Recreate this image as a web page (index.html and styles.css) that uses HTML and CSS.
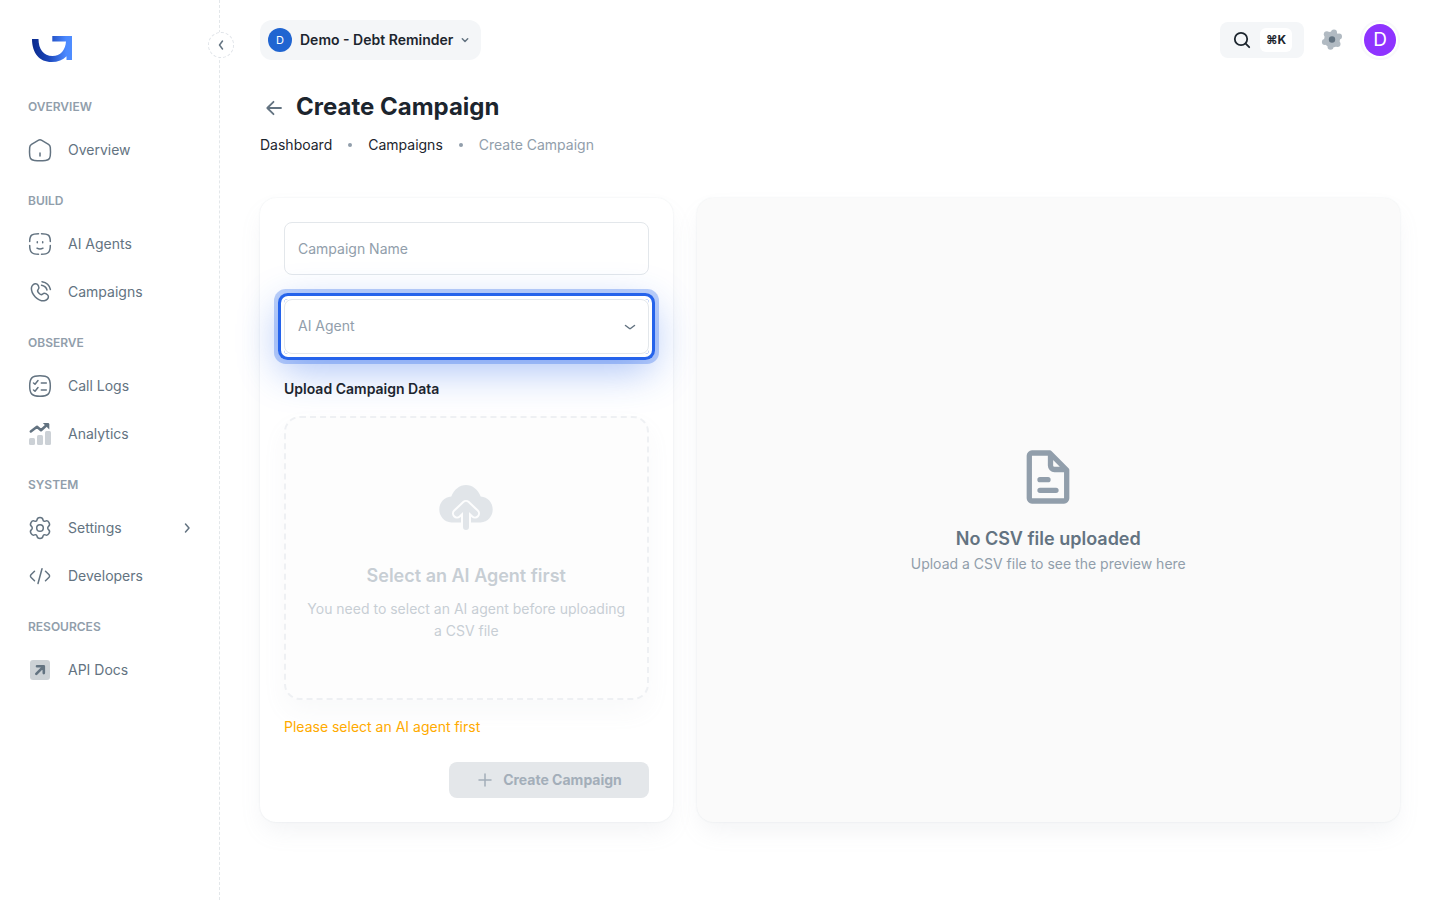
FILE: index.html
```html
<!DOCTYPE html>
<html lang="en">
<head>
    <meta charset="UTF-8">
    <meta name="viewport" content="width=device-width, initial-scale=1.0">
    <title>Create Campaign</title>
    <link rel="stylesheet" href="styles.css">
</head>
<body>
    <aside class="sidebar">
        <a href="#" class="logo" aria-label="Home">
            <svg width="40" height="26" viewBox="0 0 40 26">
                <defs>
                    <linearGradient id="logoFill" x1="0" y1="0" x2="1" y2="0">
                        <stop offset="0" stop-color="#0a2a8c"/>
                        <stop offset="0.4" stop-color="#1a44b8"/>
                        <stop offset="0.85" stop-color="#4b89ff"/>
                        <stop offset="1" stop-color="#4f8dff"/>
                    </linearGradient>
                </defs>
                <path fill="url(#logoFill)" d="M0 3h6.500c0 10 5 17 14 17 8 0 13-6 13.500-14.500H20.300V0H40v24h-5.500v-3.800C31 24 26 26 19.500 26 7.500 26 0 17 0 3z"/>
            </svg>
        </a>
        <button type="button" class="collapse" aria-label="Collapse menu">
            <svg width="16" height="16" viewBox="0 0 16 16"><path d="M9.500 4 6.500 8l3 4"/></svg>
        </button>

        <nav>
            <h2 class="nav-title">Overview</h2>
            <a href="#" class="nav-item">
                <svg class="line" width="24" height="24" viewBox="0 0 24 24"><path d="M10.200 2.300 3.500 6.300C2.300 7 1.800 8 1.700 9.400L1.500 14c0 3 .2 5 1 6.500.8 1.300 2 1.700 4 1.900 3.500.3 7.500.3 11 0 2-.2 3.200-.6 4-1.900.8-1.500 1-3.500 1-6.500l-.2-4.600c-.1-1.400-.6-2.400-1.800-3.100l-6.700-4c-1.300-.8-2.300-.8-3.600 0zM12 15v3"/></svg>
                <span>Overview</span>
            </a>

            <h2 class="nav-title">Build</h2>
            <a href="#" class="nav-item">
                <svg class="line" width="24" height="24" viewBox="0 0 24 24"><path d="M10.500 1.700C4 1.700 1.700 3 1.700 9.500M13.500 1.700c6.500 0 8.800 1.300 8.800 7.800M1.700 13.500c0 7 2.300 8.800 8.800 8.800M22.300 13.500c0 7-2.300 8.800-8.800 8.800M9 16.200q3 1.800 6 0M9.300 9.800v1M14.700 9.800v1"/></svg>
                <span>AI Agents</span>
            </a>
            <a href="#" class="nav-item">
                <svg class="line" width="24" height="24" viewBox="0 0 24 24"><path d="m10 4.200.6 1.200c.6 1 .4 2.400-.6 3.400 0 0-1.200 1.200 1 3.400s3.400 1 3.400 1c1-.9 2.300-1.200 3.400-.6l1.200.7c1.700.9 1.900 3.300.4 4.800-.9.900-2 1.600-3.200 1.700-2 .1-5.500-.4-8.900-3.900S3.300 9 3.400 7c.1-1.200.8-2.300 1.700-3.200 1.500-1.500 3.900-1.300 4.900.4z" transform="translate(0 1)"/><path d="M14 1.700c5 .8 7.500 3.500 8.400 7.800M13.500 5.200c3 .5 4.800 2 5.500 4.800"/></svg>
                <span>Campaigns</span>
            </a>

            <h2 class="nav-title">Observe</h2>
            <a href="#" class="nav-item">
                <svg class="line" width="24" height="24" viewBox="0 0 24 24"><path d="M12 1.700c8 0 10.300 2.300 10.300 10.300S20 22.300 12 22.300 1.700 20 1.700 12 4 1.700 12 1.700zM5.500 9 7 10.200 10 6.500M5.500 16 7 17.200l3-3.700M13.300 9h5M13.300 16h5"/></svg>
                <span>Call Logs</span>
            </a>
            <a href="#" class="nav-item">
                <svg width="24" height="24" viewBox="0 0 24 24">
                    <g fill="#637381" opacity=".32"><rect x="1" y="16" width="6" height="7" rx="1.500"/><rect x="9" y="13" width="6" height="10" rx="1.500"/><rect x="17" y="9" width="6" height="14" rx="1.500"/></g>
                    <path d="m2.800 9.500 6.200-4.800 4 3.500 5-4.500" fill="none" stroke="#637381" stroke-width="2.500" stroke-linecap="round" stroke-linejoin="round"/><path d="M14.800 1H20q1.300 0 1.300 1.300V7.500z" fill="#637381"/>
                </svg>
                <span>Analytics</span>
            </a>

            <h2 class="nav-title">System</h2>
            <a href="#" class="nav-item">
                <svg class="line" width="24" height="24" viewBox="0 0 24 24"><circle cx="12" cy="12" r="3.300"/><path d="M9 3.800c.4-3.200 5.600-3.200 6 0 .2 1.300 1.200 1.800 2.400 1.300 3-1.200 5.600 3.300 3.100 5.200-1 .8-1 2.600 0 3.400 2.500 1.900-.1 6.400-3.100 5.200-1.200-.5-2.200 0-2.400 1.300-.4 3.200-5.600 3.200-6 0-.2-1.300-1.200-1.800-2.400-1.300-3 1.200-5.600-3.300-3.100-5.200 1-.8 1-2.600 0-3.400C1 8.400 3.600 3.900 6.600 5.100 7.800 5.600 8.800 5.100 9 3.800z"/></svg>
                <span>Settings</span>
                <svg class="line arrow" width="16" height="16" viewBox="0 0 16 16"><path d="m6.500 4 3.500 4-3.500 4"/></svg>
            </a>
            <a href="#" class="nav-item">
                <svg class="line" width="24" height="24" viewBox="0 0 24 24"><path d="m6.500 7.300-3.600 3.500c-.6.700-.6 1.700 0 2.400l3.600 3.500M17.500 7.300l3.600 3.500c.6.700.6 1.700 0 2.400l-3.600 3.500M14 4.800l-4 14.700"/></svg>
                <span>Developers</span>
            </a>

            <h2 class="nav-title">Resources</h2>
            <a href="#" class="nav-item">
                <svg width="24" height="24" viewBox="0 0 24 24"><rect x="2" y="2" width="20" height="20" rx="3" fill="#637381" opacity=".32"/><path d="M9 8.300h6.800v6.800M15.500 8.600 8.300 15.800" fill="none" stroke="#637381" stroke-width="2.600" stroke-linecap="round" stroke-linejoin="round"/></svg>
                <span>API Docs</span>
            </a>
        </nav>
    </aside>

    <div class="page">
        <header class="topbar">
            <button type="button" class="workspace">
                <span class="workspace-avatar">D</span>
                Demo - Debt Reminder
                <svg class="line" width="16" height="16" viewBox="0 0 16 16"><path d="m5.300 6.800 2.700 2.700 2.700-2.700"/></svg>
            </button>
            <div class="tools">
                <button type="button" class="search" aria-label="Search">
                    <svg width="20" height="20" viewBox="0 0 20 20"><circle cx="9" cy="9" r="6.200"/><path d="m13.700 13.700 3.500 3.500"/></svg>
                    <kbd>⌘K</kbd>
                </button>
                <button type="button" class="gear" aria-label="Display settings">
                    <svg width="24" height="24" viewBox="0 0 24 24">
                        <g fill="#b1bac2"><circle cx="12" cy="11.500" r="8"/><circle cx="14" cy="4.400" r="3"/><circle cx="19" cy="8.500" r="3"/><circle cx="17.500" cy="16" r="3"/><circle cx="10.500" cy="18.700" r="3"/><circle cx="4.900" cy="14" r="3"/><circle cx="6.800" cy="6.300" r="3"/></g>
                        <circle cx="12" cy="11.500" r="3.200" fill="#637381"/>
                    </svg>
                </button>
                <button type="button" class="account" aria-label="Account">D</button>
            </div>
        </header>

        <main>
            <div class="heading">
                <a href="#" class="back" aria-label="Back">
                    <svg class="line" width="20" height="20" viewBox="0 0 20 20"><path d="M17 11H3.500M9.500 4.800 3.300 11l6.200 6.200"/></svg>
                </a>
                <h1>Create Campaign</h1>
            </div>
            <nav class="breadcrumbs" aria-label="Breadcrumb">
                <a href="#">Dashboard</a>
                <span class="dot"></span>
                <a href="#">Campaigns</a>
                <span class="dot"></span>
                <span class="current">Create Campaign</span>
            </nav>

            <div class="columns">
                <form class="card form">
                    <input class="field" type="text" placeholder="Campaign Name" aria-label="Campaign Name">
                    <div class="select-wrap">
                        <select class="field" aria-label="AI Agent">
                            <option value="">AI Agent</option>
                        </select>
                        <svg class="line chevron" width="20" height="20" viewBox="0 0 20 20"><path d="m5.500 8.500 4 3q.5.400 1 0l4-3"/></svg>
                    </div>

                    <h3>Upload Campaign Data</h3>
                    <label class="dropzone">
                        <input type="file" accept=".csv" disabled>
                        <svg width="64" height="64" viewBox="0 0 64 64">
                            <path fill="#c4cdd5" d="M17.500 50.500C10 50 5.300 44 5.300 37.500c0-7 5-12.500 12-13C20 17.500 25.500 13 32 13s12 4.500 14.700 11.500c7 .5 12 6 12 13 0 6.500-4.700 12.500-12.200 13z"/>
                            <path class="halo" d="m23 41.500 9-8.500 9 8.500M32 35v20"/>
                            <path class="shaft" d="m23 41.500 9-8.500 9 8.500M32 35v20"/>
                        </svg>
                        <strong>Select an AI Agent first</strong>
                        <span>You need to select an AI agent before uploading a CSV file</span>
                    </label>
                    <p class="warning">Please select an AI agent first</p>
                    <button type="submit" class="submit" disabled>
                        <svg width="20" height="20" viewBox="0 0 20 20"><path d="M10 4v12M4 10h12"/></svg>
                        Create Campaign
                    </button>
                </form>

                <section class="card preview">
                    <svg width="64" height="64" viewBox="0 0 64 64"><path d="M16 8h17.800L50.700 25v28.300a2.700 2.700 0 0 1-2.700 2.700H16a2.700 2.700 0 0 1-2.700-2.700V10.700A2.700 2.700 0 0 1 16 8zM34.500 9v11.500a4 4 0 0 0 4 4h11M24 34.700h8M24 45.300h16"/></svg>
                    <h2>No CSV file uploaded</h2>
                    <p>Upload a CSV file to see the preview here</p>
                </section>
            </div>
        </main>
    </div>
</body>
</html>
```
FILE: styles.css
```css
* {
    box-sizing: border-box;
}

body {
    display: flex;
    min-height: 100vh;
    margin: 0;
    font-family: Inter, "Liberation Sans", sans-serif;
    font-size: 14px;
    line-height: 22px;
    color: #1c252e;
    background-color: #ffffff;
}

h1, h2, h3, p {
    margin: 0;
}

a {
    color: inherit;
    text-decoration: none;
}

button, input, select {
    font: inherit;
    color: inherit;
}

button {
    border: none;
    padding: 0;
    cursor: pointer;
}

svg {
    display: block;
    flex-shrink: 0;
}

.line {
    fill: none;
    stroke: #637381;
    stroke-width: 1.5;
    stroke-linecap: round;
    stroke-linejoin: round;
}

/* Sidebar */
.sidebar {
    position: relative;
    width: 220px;
    flex-shrink: 0;
    padding: 36px 16px 16px;
    border-right: 1px dashed #e3e7ea;
}

.logo {
    display: block;
    height: 42px;
    padding-left: 16px;
}

.collapse {
    position: absolute;
    top: 32px;
    right: -15px;
    display: flex;
    align-items: center;
    justify-content: center;
    width: 26px;
    height: 26px;
    border: 1px dashed #dfe3e8;
    border-radius: 50%;
    background-color: #ffffff;
}

.collapse svg {
    fill: none;
    stroke: #637381;
    stroke-width: 1.5;
    stroke-linecap: round;
    stroke-linejoin: round;
}

.nav-title {
    padding: 20px 12px 12px;
    font-size: 12px;
    line-height: 18px;
    font-weight: 600;
    color: #919eab;
    text-transform: uppercase;
}

.nav-item {
    display: flex;
    align-items: center;
    gap: 16px;
    height: 44px;
    padding: 0 8px 0 12px;
    color: #637381;
}

.nav-item + .nav-item {
    margin-top: 4px;
}

.nav-item .arrow {
    margin-left: auto;
}

/* Top bar */
.page {
    flex: 1;
    min-width: 0;
    padding: 0 40px 40px;
}

.topbar {
    display: flex;
    align-items: center;
    justify-content: space-between;
    height: 80px;
}

.workspace {
    display: flex;
    align-items: center;
    gap: 8px;
    height: 40px;
    padding: 0 8px;
    border-radius: 12px;
    background-color: #f4f6f8;
    font-weight: 600;
}

.workspace svg {
    margin-left: -4px;
}

.workspace-avatar {
    width: 24px;
    border-radius: 50%;
    background-color: #2065d1;
    color: #ffffff;
    font-size: 11px;
    line-height: 24px;
    font-weight: 400;
}

.tools {
    display: flex;
    align-items: center;
    gap: 16px;
}

.search {
    display: flex;
    align-items: center;
    gap: 8px;
    height: 36px;
    padding: 0 12px;
    border-radius: 8px;
    background-color: #f4f6f8;
}

.search svg {
    fill: none;
    stroke: #1c252e;
    stroke-width: 1.8;
    stroke-linecap: round;
}

.search kbd {
    width: 32px;
    border-radius: 6px;
    background-color: #ffffff;
    font-family: inherit;
    font-size: 12px;
    line-height: 24px;
    font-weight: 700;
}

.gear {
    background: none;
}

.account {
    width: 40px;
    height: 40px;
    border: 2px solid #f8f9fa;
    border-radius: 50%;
    padding: 2px;
    background: #8e33ff content-box;
    color: #ffffff;
    font-size: 19px;
}

/* Page heading */
.heading {
    display: flex;
    align-items: center;
    gap: 8px;
    padding-top: 9px;
}

.back {
    padding: 4px;
}

.back svg {
    stroke-width: 1.8;
}

h1 {
    font-size: 24px;
    line-height: 36px;
    font-weight: 700;
}

.breadcrumbs {
    display: flex;
    align-items: center;
    gap: 16px;
    margin-top: 9px;
}

.breadcrumbs .dot {
    width: 4px;
    height: 4px;
    border-radius: 50%;
    background-color: #919eab;
}

.breadcrumbs .current {
    color: #919eab;
}

/* Cards */
.columns {
    display: grid;
    grid-template-columns: repeat(8, 1fr);
    gap: 24px;
    margin-top: 42px;
}

.card {
    border-radius: 16px;
    box-shadow: 0 0 2px rgba(145, 158, 171, 0.2), 0 12px 24px -4px rgba(145, 158, 171, 0.12);
}

.form {
    grid-column: span 3;
    padding: 24px;
}

.field {
    display: block;
    width: 100%;
    height: 53px;
    padding: 0 13px;
    border: 1px solid #e3e7eb;
    border-radius: 8px;
    outline: none;
    background-color: #ffffff;
}

.field::placeholder {
    color: #919eab;
    opacity: 1;
}

.select-wrap {
    position: relative;
    margin-top: 24px;
    border-radius: 4px;
    box-shadow: 0 0 0 3px #ffffff, 0 0 0 6px #2563eb, 0 0 0 10px rgba(37, 99, 235, 0.3), 0 12px 40px 4px rgba(37, 99, 235, 0.4);
}

.select-wrap .field {
    height: 55px;
    padding-bottom: 2px;
    appearance: none;
    color: #919eab;
}

.chevron {
    position: absolute;
    top: 18px;
    right: 9px;
    pointer-events: none;
}

h3 {
    position: relative;
    margin-top: 24px;
    font-size: 14px;
    line-height: 22px;
    font-weight: 600;
}

.dropzone {
    display: flex;
    flex-direction: column;
    align-items: center;
    margin-top: 16px;
    padding: 54px 16px 56px;
    border: 2px dashed #dfe3e8;
    border-radius: 16px;
    background-color: #fcfcfd;
    box-shadow: 0 12px 24px -4px rgba(145, 158, 171, 0.12);
    color: #919eab;
    text-align: center;
    opacity: 0.5;
}

.dropzone input {
    position: absolute;
    width: 1px;
    height: 1px;
    opacity: 0;
}

.halo, .shaft {
    fill: none;
    stroke-linecap: round;
    stroke-linejoin: round;
}

.halo {
    stroke: #fcfcfd;
    stroke-width: 10;
}

.shaft {
    stroke: #c4cdd5;
    stroke-width: 6;
}

.dropzone strong {
    margin-top: 26px;
    font-size: 18px;
    line-height: 28px;
    font-weight: 600;
}

.dropzone span {
    margin-top: 8px;
}

.warning {
    margin-top: 16px;
    color: #ffab00;
}

.submit {
    display: flex;
    align-items: center;
    justify-content: center;
    gap: 8px;
    width: 200px;
    height: 36px;
    margin: 24px 0 0 auto;
    border-radius: 8px;
    background-color: #e4e7ea;
    color: #a3aeb9;
    font-weight: 700;
}

.submit svg {
    fill: none;
    stroke: #a3aeb9;
    stroke-width: 1.5;
    stroke-linecap: round;
}

.preview {
    grid-column: span 5;
    display: flex;
    flex-direction: column;
    align-items: center;
    justify-content: center;
    background-color: #fafafa;
    color: #919eab;
}

.preview svg {
    fill: none;
    stroke: #919eab;
    stroke-width: 5.3;
    stroke-linecap: round;
    stroke-linejoin: round;
}

.preview h2 {
    margin-top: 16px;
    font-size: 18px;
    line-height: 28px;
    font-weight: 600;
    color: #637381;
}
```
